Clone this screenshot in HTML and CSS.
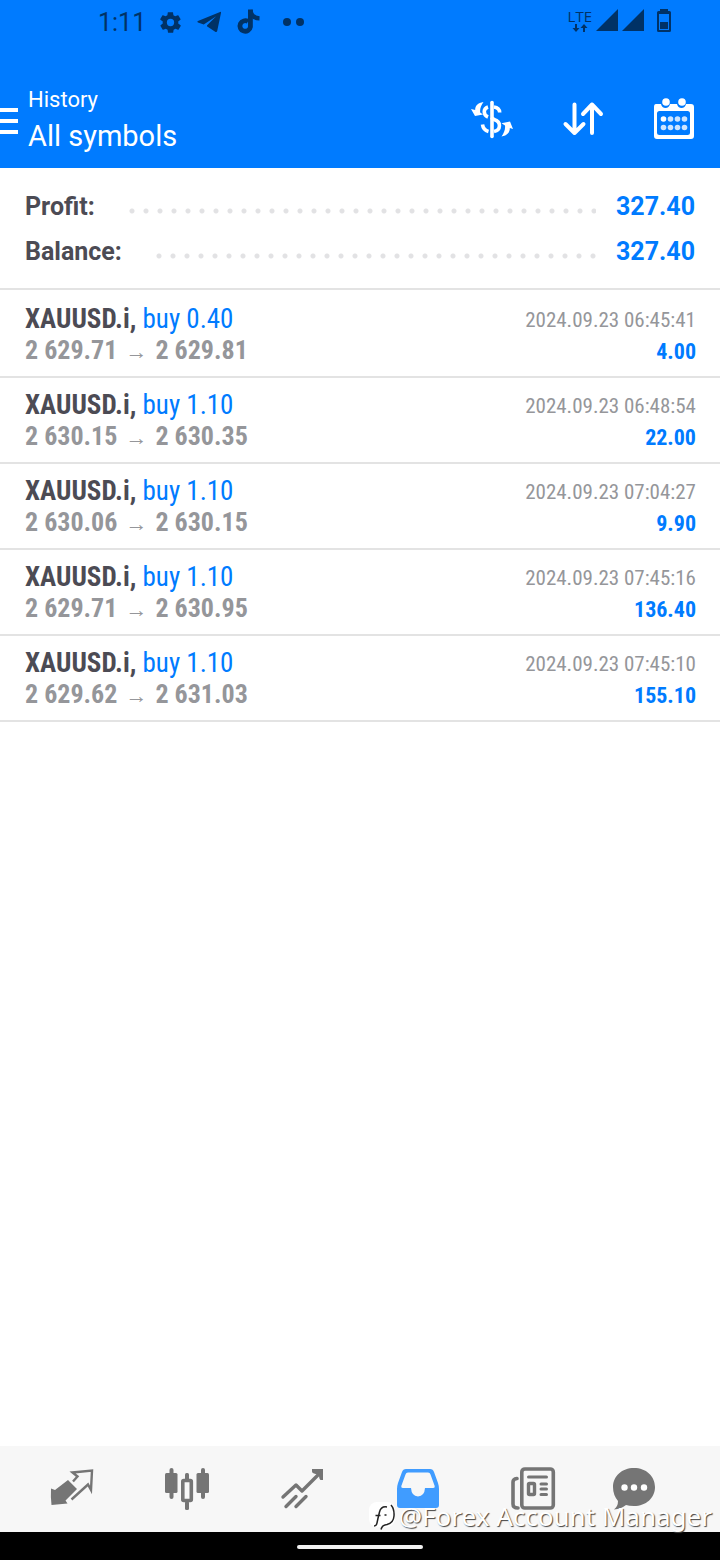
FILE: index.html
```html
<!DOCTYPE html>
<html lang="en">
<head>
<meta charset="utf-8">
<meta name="viewport" content="width=device-width, initial-scale=1">
<title>History</title>
<link rel="stylesheet" href="styles.css">
</head>
<body>
<div class="app">
  <header class="top">
    <div class="status">
      <div class="status-left">
        <span class="clock">1:11</span>
        <svg class="st-gear" viewBox="0 0 24 24"><path fill="currentColor" d="M19.4 13c.04-.3.1-.7.1-1s-.03-.7-.1-1l2.1-1.6c.2-.15.25-.4.1-.65l-2-3.45c-.1-.2-.4-.3-.6-.2l-2.5 1c-.5-.4-1.1-.7-1.7-1l-.4-2.6c0-.25-.2-.4-.5-.4h-4c-.25 0-.45.15-.5.4l-.4 2.6c-.6.25-1.2.6-1.7 1l-2.5-1c-.2-.1-.5 0-.6.2l-2 3.45c-.1.2-.1.5.1.65L4.6 11c-.07.3-.1.7-.1 1s.03.7.1 1l-2.1 1.6c-.2.15-.25.4-.1.65l2 3.45c.1.2.4.3.6.2l2.5-1c.5.4 1.1.7 1.7 1l.4 2.6c.05.25.25.4.5.4h4c.25 0 .45-.15.5-.4l.4-2.6c.6-.25 1.2-.6 1.7-1l2.5 1c.2.1.5 0 .6-.2l2-3.45c.1-.2.1-.5-.1-.65zM12 15.500a3.500 3.500 0 1 1 0-7 3.500 3.500 0 0 1 0 7z"/></svg>
        <svg class="st-plane" viewBox="0 0 26 22"><path fill="currentColor" d="M24 .5 1 10q-1.500.8 0 1.500l6 2L20 5 10.500 14.500l-.2 1 9 5.800q1.300.5 1.700-1L25 1.500q.2-1.300-1-1z"/></svg>
        <svg class="st-note" viewBox="0 0 24 26"><path fill="none" stroke="currentColor" stroke-width="5" d="M11.500 12.500A5.500 5.500 0 1 0 14 18V0"/><path fill="none" stroke="currentColor" stroke-width="4.500" d="M14 .5C14.500 6 18 9 23.500 9.200"/></svg>
        <svg class="st-dots" viewBox="0 0 22 8"><g fill="currentColor"><circle cx="4" cy="4" r="4"/><circle cx="17" cy="4" r="4"/></g></svg>
      </div>
      <div class="status-right">
        <div class="lte"><span>LTE</span>
          <svg viewBox="0 0 16 8"><path fill="currentColor" d="M3 0h2v4h2.500L4 8 .5 4H3zM11 8h2V4h2.500L12 0 8.500 4H11z"/></svg>
        </div>
        <svg class="signal" viewBox="0 0 22 22"><path fill="currentColor" d="M22 0v22H0z"/></svg>
        <svg class="signal" viewBox="0 0 22 22"><path fill="currentColor" d="M22 0v22H0z"/></svg>
        <svg class="battery" viewBox="0 0 14 23"><path fill="currentColor" fill-rule="evenodd" d="M3 0h8v2h1.500Q14 2 14 3.500v18q0 1.500-1.500 1.500h-11Q0 23 0 21.500v-18Q0 2 1.500 2H3zM2 5v16h10V5z"/><path fill="currentColor" d="M3 13h8v7H3z"/></svg>
      </div>
    </div>
    <div class="bar">
      <button class="menu" aria-label="Menu"><svg viewBox="0 0 18 26"><path fill="#fff" d="M0 0h18v4H0zM0 11h18v4H0zM0 22h18v4H0z"/></svg></button>
      <div class="titles"><p class="overline">History</p><h1>All symbols</h1></div>
      <div class="actions">
        <button aria-label="Filter by symbol"><svg class="ic-dollar" viewBox="0 0 42 37"><g fill="none" stroke="#fff" stroke-width="3.600"><path d="M21 1.500v34" stroke-linecap="round"/><path d="M17 6c-5 1.500-5 8 0 10M23 6c4 .5 5.500 2.500 5.700 5.500M23 18.500c7.500 2 7 10.500 0 12M11.500 23.500c.5 4 2.500 6 6 7M20 16.500l5 3"/></g><path fill="#fff" d="M12.500 1C6.500 2 4 5 4.200 9L0 8l4 7 8-1.500-2.800-2C8.700 8 10 4.500 12.500 1zM30.500 35.500c6-1 8.500-4.500 8.300-8.500l3.200 1-3-7.500-8.500 1.800 3.500 2.200c.5 4-1 7.500-3.500 11z"/></svg></button>
        <button aria-label="Sort"><svg class="ic-sort" viewBox="0 0 40 34"><path fill="none" stroke="#fff" stroke-width="4" stroke-linecap="round" stroke-linejoin="round" d="M11.500 2.500V31M2.500 22l9 9 9-9M29 31V2.500M20 12l9-9.500 9 9.500"/></svg></button>
        <button aria-label="Choose period"><svg class="ic-cal" viewBox="0 0 42 42"><path fill="#fff" fill-rule="evenodd" d="M3 6h5q1 4 4.500 4T17 6h7q1 4 4.500 4T33 6h5q3 0 3 3v29q0 3-3 3H4q-3 0-3-3V9q0-3 2-3zM6.500 13Q4 13 4 15.500v19Q4 37 6.500 37h28q2.500 0 2.500-2.500v-19Q37 13 34.500 13z"/><g fill="#fff"><circle cx="13" cy="4" r="3.800"/><circle cx="29" cy="4" r="3.800"/><circle cx="10.500" cy="21" r="2.800"/></g><g fill="#fff" opacity=".8"><circle cx="17.500" cy="21" r="2.800"/><circle cx="24.500" cy="21" r="2.800"/><circle cx="31.500" cy="21" r="2.800"/><circle cx="10.500" cy="29.500" r="2.800"/><circle cx="17.500" cy="29.500" r="2.800"/><circle cx="24.500" cy="29.500" r="2.800"/><circle cx="31.500" cy="29.500" r="2.800"/></g></svg></button>
      </div>
    </div>
  </header>
  <main class="content">
    <dl class="summary">
      <div class="sum-row"><dt>Profit:</dt><dd>327.40</dd></div>
      <div class="sum-row"><dt>Balance:</dt><dd>327.40</dd></div>
    </dl>
    <ul class="deals">
      <li class="deal"><div><p class="symbol">XAUUSD.i, <span>buy 0.40</span></p><p class="prices">2 629.71 <i>→</i> 2 629.81</p></div><div class="result"><time>2024.09.23 06:45:41</time><p class="gain">4.00</p></div></li>
      <li class="deal"><div><p class="symbol">XAUUSD.i, <span>buy 1.10</span></p><p class="prices">2 630.15 <i>→</i> 2 630.35</p></div><div class="result"><time>2024.09.23 06:48:54</time><p class="gain">22.00</p></div></li>
      <li class="deal"><div><p class="symbol">XAUUSD.i, <span>buy 1.10</span></p><p class="prices">2 630.06 <i>→</i> 2 630.15</p></div><div class="result"><time>2024.09.23 07:04:27</time><p class="gain">9.90</p></div></li>
      <li class="deal"><div><p class="symbol">XAUUSD.i, <span>buy 1.10</span></p><p class="prices">2 629.71 <i>→</i> 2 630.95</p></div><div class="result"><time>2024.09.23 07:45:16</time><p class="gain">136.40</p></div></li>
      <li class="deal"><div><p class="symbol">XAUUSD.i, <span>buy 1.10</span></p><p class="prices">2 629.62 <i>→</i> 2 631.03</p></div><div class="result"><time>2024.09.23 07:45:10</time><p class="gain">155.10</p></div></li>
    </ul>
  </main>
  <nav class="tabs">
    <button aria-label="Quotes"><svg viewBox="0 0 44 44"><path fill="currentColor" d="M18 13l9 9-11.500 11.500 2 3q-8 .5-16 1.500Q.5 30 1 21.500l4 1.500z"/><path fill="none" stroke="currentColor" stroke-width="2.400" d="M21.500 32.500 38 17.500l3 5.500L42 3.500 22.500 5.500l5 4-4.500 5"/></svg></button>
    <button aria-label="Charts"><svg viewBox="0 0 44 44"><g fill="currentColor"><rect x="0" y="6" width="12.500" height="20" rx="1.500"/><rect x="4.500" y="1" width="4" height="31" rx="2"/><rect x="31.500" y="6" width="12.500" height="20" rx="1.500"/><rect x="36" y="1" width="4" height="31" rx="2"/><rect x="20" y="6" width="4" height="7" rx="1.500"/><rect x="20" y="34" width="4" height="9" rx="1.500"/></g><rect x="17.800" y="13.500" width="8.500" height="20" rx="1" fill="none" stroke="currentColor" stroke-width="3.600"/></svg></button>
    <button aria-label="Trade"><svg viewBox="0 0 44 44"><path fill="none" stroke="currentColor" stroke-width="3.400" stroke-linecap="round" stroke-linejoin="round" d="M3 30 16 18l6 6L40 6M6 39.500l10-10M16 39.500l10-10"/><path fill="currentColor" d="M32 2h11v11h-2.500q-1.500-1-1.500-5l-5-1.500q-2-.5-2-2z"/></svg></button>
    <button class="active" aria-label="History"><svg viewBox="-1 -1 44 44"><path fill="currentColor" fill-rule="evenodd" d="M9 1h24q3 0 4 3l4 11q1 3 1 6v16q0 3-3 3H3q-3 0-3-3V21q0-3 1-6L5 4q1-3 4-3zM11 4.500q-2 0-2.500 2L4.300 18q-.5 2 1.500 2H14q.5 8 7 8.500Q27.500 28 28 20h8.200q2 0 1.500-2L33.500 6.500q-.5-2-2.500-2z"/></svg></button>
    <button aria-label="News"><svg viewBox="0 0 44 44"><g fill="none" stroke="currentColor" stroke-width="3.600" stroke-linecap="round"><rect x="10.800" y="2" width="31.500" height="39" rx="3"/><path d="M6 11.500Q2 12 2 15v22q0 4 5 4"/><path d="M17.500 10h18M30 17h5.500M30 22h5.500M30 27.500h5.500" stroke-width="3"/><rect x="17.500" y="16.500" width="6" height="11" rx="1" stroke-width="3.400"/></g></svg></button>
    <button class="last" aria-label="Messages"><svg viewBox="-1 -1 44 44"><path fill="currentColor" d="M21 0c12 0 21 8 21 19s-9 19-21 19q-5 0-8-1-5 4-12 4.500 4-3 4-8.500Q0 27 0 19C0 8 9 0 21 0z"/><g fill="#fff"><circle cx="11.500" cy="19.500" r="3.200"/><circle cx="21" cy="19.500" r="3.200"/><circle cx="31" cy="19.500" r="3.200"/></g></svg></button>
    <div class="watermark"><svg viewBox="0 0 27 28"><rect x="0" y="0" width="26" height="25" rx="8" fill="#fff"/><path fill="none" stroke="#222" stroke-width="1.500" d="M18 5q-6-1-7.500 5T8 21q-.5 3-3 3M6.500 13.500h5M15.500 13h2M22 3q3.500 4 3 11-.5 7-7 8.500-5 .5-6 5"/></svg><span>@Forex Account Manager</span></div>
  </nav>
  <div class="home"><span></span></div>
</div>
</body>
</html>
```
FILE: styles.css
```css
* { box-sizing: border-box; margin: 0; padding: 0; }
body { font-family: Roboto, sans-serif; background: #fff; color: #4c4b54; }
svg { display: block; overflow: visible; }
button { border: 0; background: none; color: inherit; }
ul { list-style: none; }
.app { min-height: 100vh; display: flex; flex-direction: column; }

.top { background: #007bff; color: #fff; }
.status { height: 44px; padding: 0 49px 0 98px; display: flex; justify-content: space-between; color: #003266; }
.status-left, .status-right { display: flex; align-items: center; }
.clock { font-size: 25px; width: 60px; }
.st-gear { width: 25px; height: 25px; }
.st-plane { width: 25px; height: 22px; margin-left: 14px; }
.st-note { width: 23px; height: 26px; margin-left: 15px; }
.st-dots { width: 22px; height: 8px; margin-left: 23px; }
.lte { font-family: "Open Sans", sans-serif; font-size: 15px; line-height: 14px; display: flex; flex-direction: column; align-items: center; }
.lte svg { width: 16px; height: 8px; margin-top: 1px; }
.status-right { padding-bottom: 4px; }
.signal { width: 22px; height: 22px; margin-left: 4px; }
.battery { width: 14px; height: 23px; margin-left: 13px; }
.bar { height: 124px; display: flex; align-items: center; padding-right: 25px; }
.menu svg { width: 18px; height: 26px; }
.menu { padding-top: 30px; }
.titles { margin-left: 10px; padding-top: 28px; flex: 1; }
.overline { font-size: 22px; line-height: 32px; }
h1 { font-size: 29px; font-weight: 400; line-height: 40px; }
.actions { display: flex; align-items: center; gap: 50px; padding-top: 26px; }
.ic-dollar { width: 42px; height: 37px; }
.ic-sort { width: 40px; height: 34px; }
.ic-cal { width: 42px; height: 42px; }

.content { flex: 1; }
.summary { padding: 16px 25px 14px; border-bottom: 2px solid #e3e3e3; }
.sum-row { display: flex; align-items: center; height: 45px; font-size: 25px; font-weight: 700; }
.sum-row::after { content: ""; order: 1; flex: 1; height: 6px; margin: 9px 20px 0 30px; background: radial-gradient(circle at 7px 3px, #e2e2e4 2px, transparent 3px) 0 0 / 14px 6px repeat-x; }
.sum-row dd { order: 2; color: #007bff; }

.deals { padding-top: 2px; font-family: "Roboto Condensed", "Liberation Sans Narrow", Roboto, sans-serif; }
.deal { display: flex; justify-content: space-between; padding: 11px 24px 9px 25px; border-bottom: 2px solid #e3e3e3; white-space: nowrap; }
.symbol { font-size: 27px; line-height: 32px; font-weight: 700; }
.symbol span { color: #007bff; font-weight: 400; }
.prices { font-size: 26px; line-height: 31px; font-weight: 700; color: #95969a; }
.prices i { font: 22px/20px "Liberation Sans", sans-serif; margin: 0 2px; }
.result { text-align: right; padding-top: 2px; }
.result time { display: block; font-size: 21px; line-height: 31px; color: #95969a; }
.gain { font-size: 22px; line-height: 31px; font-weight: 700; color: #007bff; }

.tabs { position: relative; height: 86px; padding: 0 14px; display: grid; grid-template-columns: repeat(6, 1fr); justify-items: center; align-items: center; background: #f7f7f7; color: #757575; }
.tabs button svg { width: 44px; height: 44px; }
.tabs .active { color: #409cff; }
.tabs .last { margin-right: 28px; }
.watermark { position: absolute; right: 8px; bottom: 0; display: flex; align-items: center; gap: 3px; font: 26px/32px "Noto Sans", sans-serif; color: #fff; text-shadow: 1px 1px 1px #444; white-space: nowrap; }
.watermark svg { width: 27px; height: 28px; }
.home { height: 28px; background: #000; display: flex; justify-content: center; align-items: center; padding-top: 2px; }
.home span { width: 126px; height: 4px; border-radius: 2px; background: #f1f1f1; }
```
